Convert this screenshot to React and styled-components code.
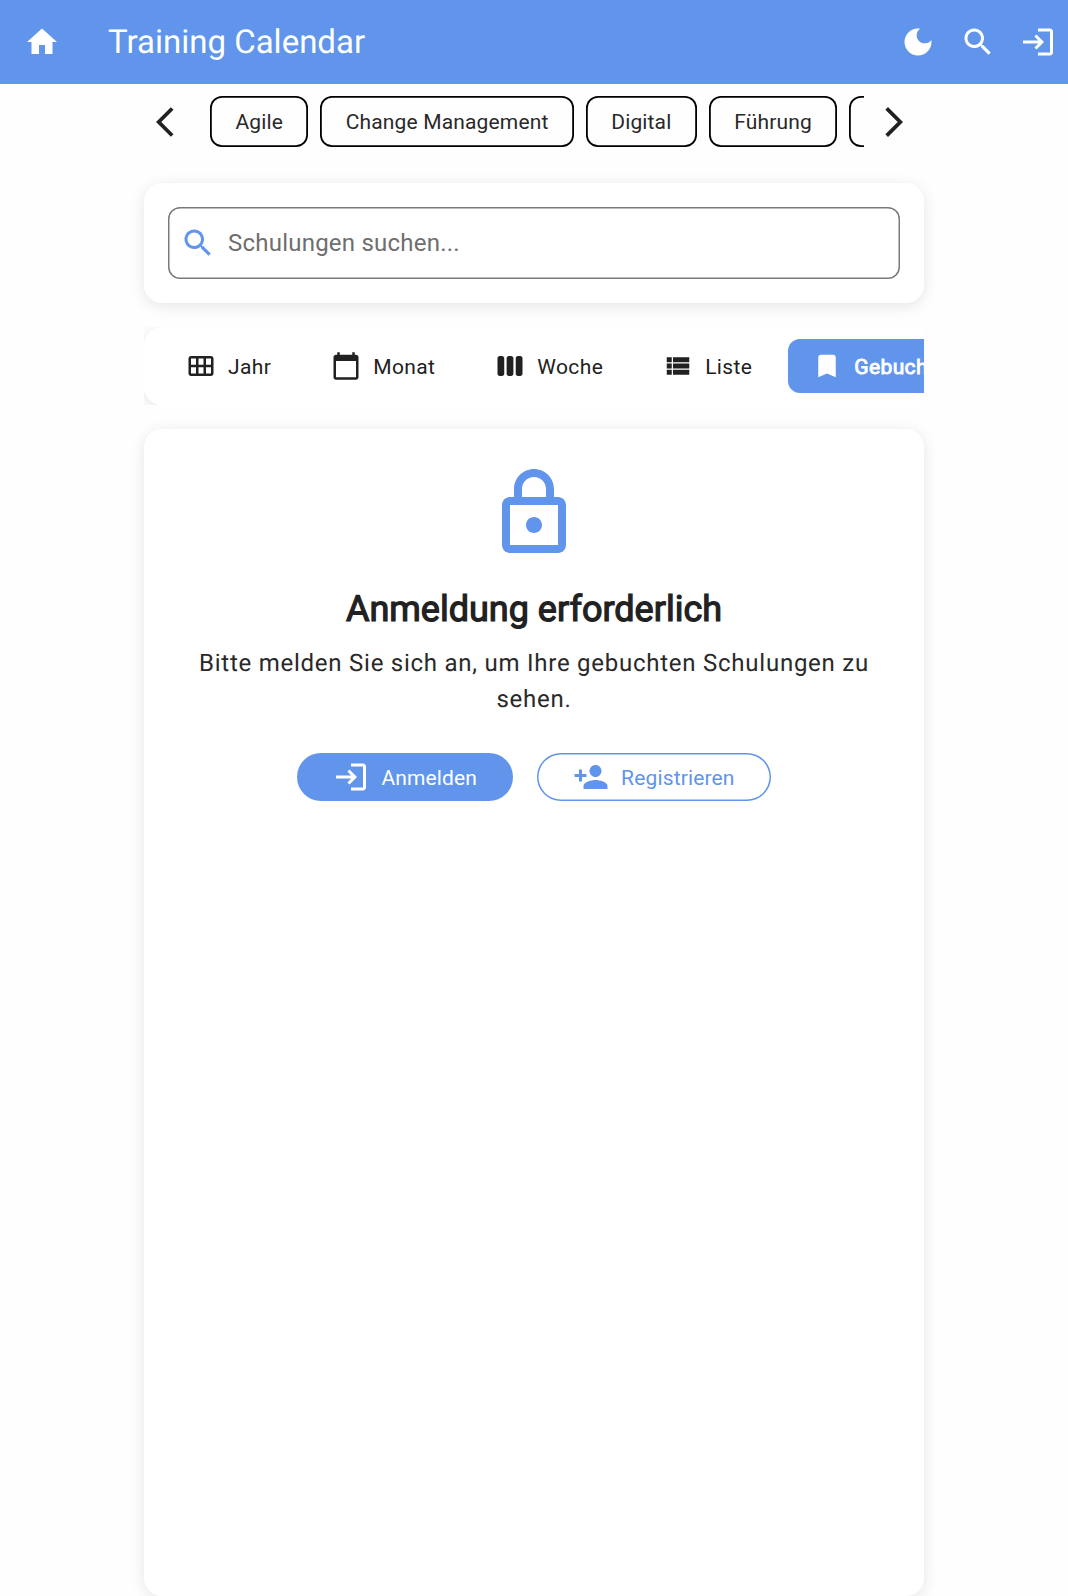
import React from 'react';
import styled, { createGlobalStyle } from 'styled-components';

const BLUE = '#6095eb';
const INK = '#212121';
const TEXT = '#292929';

const Global = createGlobalStyle`
  *, *::before, *::after { box-sizing: border-box; }
  html, body { margin: 0; padding: 0; }
  body {
    background: #fefefe;
    color: ${INK};
    font-family: Roboto, "Liberation Sans", sans-serif;
    text-rendering: geometricPrecision;
    overflow: hidden;
  }
  button { font: inherit; color: inherit; background: none; border: 0; padding: 0; }
`;

const paths = {
  home: 'M10 20v-6h4v6h5v-8h3L12 3 2 12h3v8z',
  moon: 'M12 3c-4.97 0-9 4.03-9 9s4.03 9 9 9 9-4.03 9-9c0-.46-.04-.92-.1-1.36-.98 1.37-2.58 2.26-4.4 2.26-2.98 0-5.4-2.42-5.4-5.4 0-1.81.89-3.42 2.26-4.4C12.92 3.04 12.46 3 12 3z',
  search: 'M15.5 14h-.79l-.28-.27C15.41 12.59 16 11.11 16 9.5 16 5.91 13.09 3 9.5 3S3 5.91 3 9.5 5.91 16 9.5 16c1.61 0 3.09-.59 4.23-1.57l.27.28v.79l5 4.99L20.49 19l-4.99-5zm-6 0C7.01 14 5 11.99 5 9.5S7.01 5 9.5 5 14 7.01 14 9.5 11.99 14 9.5 14z',
  login: 'M11 7L9.6 8.4l2.6 2.6H2v2h10.2l-2.6 2.6L11 17l5-5-5-5zm9 12h-8v2h8c1.1 0 2-.9 2-2V5c0-1.1-.9-2-2-2h-8v2h8v14z',
  back: 'M11.67 3.87L9.9 2.1 0 12l9.9 9.9 1.77-1.77L3.54 12z',
  forward: 'M6.23 20.23L8 22l10-10L8 2 6.23 3.77 14.46 12z',
  month: 'M20 4H4c-1.1 0-2 .9-2 2v12c0 1.1.9 2 2 2h16c1.1 0 2-.9 2-2V6c0-1.1-.9-2-2-2zM8 11H4V6h4v5zm6 0h-4V6h4v5zm6 0h-4V6h4v5zM8 18H4v-5h4v5zm6 0h-4v-5h4v5zm6 0h-4v-5h4v5z',
  today: 'M20 3h-1V1h-2v2H7V1H5v2H4c-1.1 0-2 .9-2 2v16c0 1.1.9 2 2 2h16c1.1 0 2-.9 2-2V5c0-1.1-.9-2-2-2zm0 18H4V8h16v13z',
  week: 'M3.8 4h1.8c1 0 1.8.8 1.8 1.8v12.4c0 1-.8 1.8-1.8 1.8H3.8c-1 0-1.8-.8-1.8-1.8V5.8C2 4.8 2.8 4 3.8 4zM11.1 4h1.8c1 0 1.8.8 1.8 1.8v12.4c0 1-.8 1.8-1.8 1.8h-1.8c-1 0-1.8-.8-1.8-1.8V5.8c0-1 .8-1.8 1.8-1.8zM18.4 4h1.8c1 0 1.8.8 1.8 1.8v12.4c0 1-.8 1.8-1.8 1.8h-1.8c-1 0-1.8-.8-1.8-1.8V5.8c0-1 .8-1.8 1.8-1.8z',
  list: 'M3 14h4v-4H3v4zm0 5h4v-4H3v4zM3 9h4V5H3v4zm5 5h13v-4H8v4zm0 5h13v-4H8v4zM8 5v4h13V5H8z',
  bookmark: 'M17 3H7c-1.1 0-1.99.9-1.99 2L5 21l7-3 7 3V5c0-1.1-.9-2-2-2z',
  lock: 'M12 17c1.1 0 2-.9 2-2s-.9-2-2-2-2 .9-2 2 .9 2 2 2zm6-9h-1V6c0-2.76-2.24-5-5-5S7 3.24 7 6v2H6c-1.1 0-2 .9-2 2v10c0 1.1.9 2 2 2h12c1.1 0 2-.9 2-2V10c0-1.1-.9-2-2-2zM9 6c0-1.66 1.34-3 3-3s3 1.34 3 3v2H9V6zm9 14H6V10h12v10z',
  personAdd: 'M15 12c2.21 0 4-1.79 4-4s-1.79-4-4-4-4 1.79-4 4 1.79 4 4 4zm-9-2V7H4v3H1v2h3v3h2v-3h3v-2H6zm9 4c-2.67 0-8 1.34-8 4v2h16v-2c0-2.66-5.33-4-8-4z',
};

const Svg = styled.svg`
  display: block;
  flex: none;
  width: ${(p) => p.$size}px;
  height: ${(p) => p.$size}px;
  color: ${(p) => p.$color || 'inherit'};
  fill: currentColor;
  stroke: none;
`;

const Icon = ({ name, size = 36, color }) => (
  <Svg viewBox="0 0 24 24" $size={size} $color={color} aria-hidden="true">
    <path d={paths[name]} />
  </Svg>
);

const Page = styled.div`
  display: flex;
  flex-direction: column;
  height: 1596px;
  overflow: hidden;
`;

const AppBar = styled.header`
  display: flex;
  align-items: center;
  flex: none;
  height: 84px;
  padding: 0 12px 0 24px;
  background: ${BLUE};
  color: #fff;
`;

const Title = styled.h1`
  flex: 1;
  margin: 0 0 0 48px;
  padding-top: 2px;
  font-size: 33px;
  font-weight: 400;
  line-height: 42px;
  letter-spacing: 0;
`;

const Actions = styled.div`
  display: flex;
  gap: 24px;
`;

const Main = styled.main`
  display: flex;
  flex-direction: column;
  flex: 1;
  width: 780px;
  margin: 0 auto;
`;

const Categories = styled.nav`
  display: flex;
  align-items: center;
  gap: 12px;
  height: 75px;
  padding: 0 12px;
`;

const ChipList = styled.div`
  display: flex;
  flex: 1;
  gap: 12px;
  min-width: 0;
  padding-left: 6px;
  overflow: hidden;
`;

const Chip = styled.button`
  flex: none;
  height: 51px;
  padding: 0 25.4px;
  border-radius: 12px;
  box-shadow: inset 0 0 0 1.8px #000;
  color: ${TEXT};
  font-size: 21px;
  letter-spacing: 0.15px;
  white-space: nowrap;
`;

const Card = styled.section`
  background: #fff;
  border-radius: 18px;
  box-shadow: 0 3px 15px rgba(0, 0, 0, 0.1);
`;

const SearchCard = styled(Card)`
  flex: none;
  margin-top: 24px;
  padding: 24px;
`;

const SearchField = styled.div`
  display: flex;
  align-items: center;
  gap: 12px;
  height: 72px;
  padding: 0 12px;
  border-radius: 12px;
  box-shadow: inset 0 0 0 1.5px #7a7a7a;
`;

const SearchInput = styled.input`
  flex: 1;
  min-width: 0;
  padding: 0;
  border: 0;
  outline: 0;
  background: transparent;
  font: 400 24px/36px Roboto, sans-serif;
  letter-spacing: 0.225px;
  &::placeholder { color: #6e6e6e; opacity: 1; }
`;

const TabsViewport = styled.div`
  flex: none;
  height: 78px;
  margin-top: 24px;
  overflow: hidden;
`;

const Tabs = styled(Card)`
  display: flex;
  gap: 12px;
  width: max-content;
  padding: 12px 18px;
`;

const Tab = styled.button`
  display: flex;
  align-items: center;
  gap: 12px;
  height: 54px;
  padding: 0 24px;
  border-radius: 12px;
  background: ${(p) => (p.$active ? BLUE : 'transparent')};
  color: ${(p) => (p.$active ? '#fff' : INK)};
  -webkit-text-stroke: ${(p) => (p.$active ? '0.9px #fff' : '0')};
  font-size: 21px;
  letter-spacing: 0.375px;
  white-space: nowrap;
`;

const Label = styled.span`
  padding-top: 2px;
`;

const Content = styled(Card)`
  display: flex;
  flex-direction: column;
  align-items: center;
  flex: 1;
  margin-top: 24px;
  padding: 36px 48px;
`;

const Heading = styled.h2`
  margin: 24px 0 0;
  font-size: 36px;
  font-weight: 400;
  line-height: 48px;
  -webkit-text-stroke: 1.2px ${INK};
`;

const Message = styled.p`
  margin: 12px 0 0;
  color: ${TEXT};
  font-size: 24px;
  line-height: 36px;
  letter-spacing: 0.75px;
  text-align: center;
`;

const Buttons = styled.div`
  display: flex;
  gap: 24px;
  margin-top: 36px;
`;

const Pill = styled.button`
  display: flex;
  align-items: center;
  gap: 12px;
  height: 48px;
  padding: 0 36px;
  border-radius: 24px;
  background: ${(p) => (p.$filled ? BLUE : 'transparent')};
  color: ${(p) => (p.$filled ? '#fff' : BLUE)};
  box-shadow: ${(p) => (p.$filled ? 'none' : `inset 0 0 0 1.5px ${BLUE}`)};
  font-size: 21px;
  letter-spacing: 0.15px;
`;

const chips = ['Agile', 'Change Management', 'Digital', 'Führung', ''];

const tabs = [
  { icon: 'month', label: 'Jahr' },
  { icon: 'today', label: 'Monat' },
  { icon: 'week', label: 'Woche' },
  { icon: 'list', label: 'Liste' },
  { icon: 'bookmark', label: 'Gebucht', active: true },
];

export default function App() {
  return (
    <Page>
      <Global />
      <AppBar>
        <Icon name="home" />
        <Title>Training Calendar</Title>
        <Actions>
          <Icon name="moon" />
          <Icon name="search" />
          <Icon name="login" />
        </Actions>
      </AppBar>
      <Main>
        <Categories>
          <Icon name="back" />
          <ChipList>
            {chips.map((c) => (
              <Chip key={c}>{c}</Chip>
            ))}
          </ChipList>
          <Icon name="forward" />
        </Categories>
        <SearchCard>
          <SearchField>
            <Icon name="search" color={BLUE} />
            <SearchInput placeholder="Schulungen suchen..." />
          </SearchField>
        </SearchCard>
        <TabsViewport>
          <Tabs>
            {tabs.map((t) => (
              <Tab key={t.label} $active={t.active}>
                <Icon name={t.icon} size={30} />
                <Label>{t.label}</Label>
              </Tab>
            ))}
          </Tabs>
        </TabsViewport>
        <Content>
          <Icon name="lock" size={96} color={BLUE} />
          <Heading>Anmeldung erforderlich</Heading>
          <Message>Bitte melden Sie sich an, um Ihre gebuchten Schulungen zu sehen.</Message>
          <Buttons>
            <Pill $filled>
              <Icon name="login" />
              <Label>Anmelden</Label>
            </Pill>
            <Pill>
              <Icon name="personAdd" />
              <Label>Registrieren</Label>
            </Pill>
          </Buttons>
        </Content>
      </Main>
    </Page>
  );
}
